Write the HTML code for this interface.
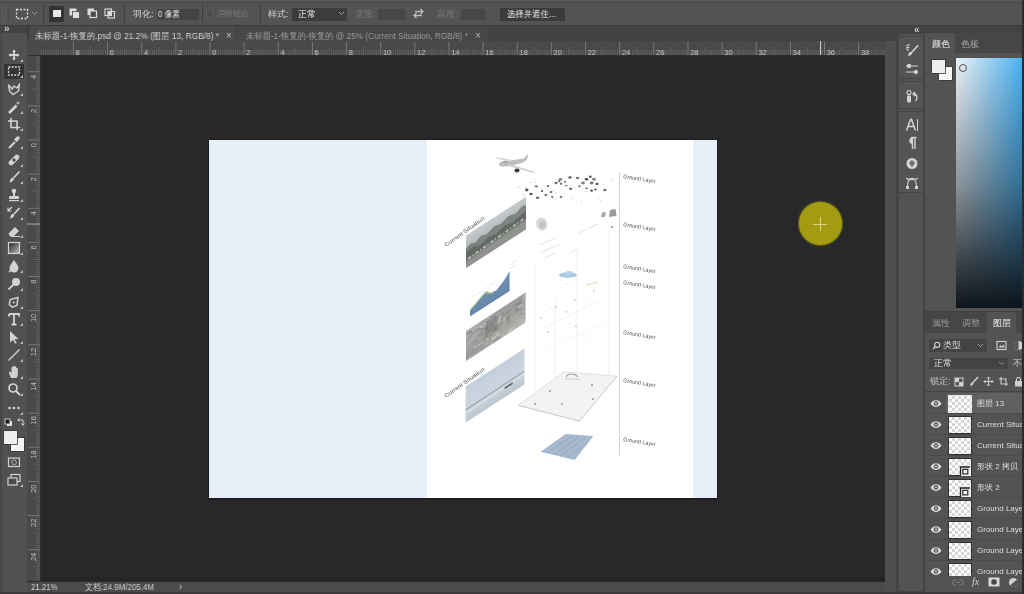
<!DOCTYPE html>
<html><head><meta charset="utf-8"><style>
html,body{margin:0;padding:0;width:1024px;height:594px;overflow:hidden;background:#4b4b4b;font-family:"Liberation Sans",sans-serif}
div,span,svg{position:absolute}
.t{white-space:nowrap;line-height:1;will-change:transform}
</style></head><body>
<div style="left:0px;top:0px;width:1024px;height:26px;background:#535353"></div>
<div style="left:0px;top:0px;width:1024px;height:2px;background:#575757"></div>
<div style="left:0px;top:2px;width:1024px;height:1px;background:#454545"></div>
<div style="left:0px;top:25px;width:1024px;height:1px;background:#3c3c3c"></div>
<div style="left:2px;top:5px;width:1px;height:17px;background:#5c5c5c"></div>
<div style="left:5px;top:5px;width:1px;height:17px;background:#5c5c5c"></div>
<div style="left:8px;top:5px;width:1px;height:17px;background:#4a4a4a"></div>
<svg style="left:15px;top:8px" width="14" height="12" viewBox="0 0 14 12"><rect x="1.5" y="1.5" width="11" height="9" fill="none" stroke="#dcdcdc" stroke-width="1.3" stroke-dasharray="2 1.5"/></svg>
<svg style="left:31px;top:11px" width="7" height="5" viewBox="0 0 7 5"><path d="M1 1 L3.5 3.5 L6 1" fill="none" stroke="#9a9a9a" stroke-width="1"/></svg>
<div style="left:43px;top:5px;width:1px;height:17px;background:#3f3f3f"></div>
<div style="left:49px;top:6px;width:15px;height:16px;background:#343434"></div>
<div style="left:53px;top:10px;width:8px;height:7px;background:#e8e8e8"></div>
<svg style="left:69px;top:8px" width="12" height="11" viewBox="0 0 12 11"><rect x="0.5" y="0.5" width="7" height="7" fill="#e0e0e0"/><rect x="3.5" y="3.5" width="7" height="7" fill="#e0e0e0" stroke="#4e4e4e" stroke-width="0.8"/></svg>
<svg style="left:87px;top:8px" width="11" height="11" viewBox="0 0 11 11"><rect x="0.5" y="0.5" width="6.5" height="6.5" fill="#dcdcdc"/><rect x="3" y="3" width="6.5" height="6.5" fill="#4e4e4e" stroke="#dcdcdc" stroke-width="1.2"/></svg>
<svg style="left:104px;top:8px" width="12" height="11" viewBox="0 0 12 11"><rect x="1" y="1" width="6.5" height="6.5" fill="none" stroke="#dcdcdc" stroke-width="1.1"/><rect x="4" y="3.5" width="6.5" height="6.5" fill="none" stroke="#dcdcdc" stroke-width="1.1"/><rect x="4" y="3.5" width="3.5" height="4" fill="#dcdcdc"/></svg>
<div style="left:124px;top:5px;width:1px;height:17px;background:#3f3f3f"></div>
<span class="t" style="left:133px;top:10px;color:#d4d4d4;font-size:9px">羽化:</span>
<div style="left:157px;top:9px;width:42px;height:11px;background:#444444"></div>
<span class="t" style="left:158px;top:10px;color:#e0e0e0;font-size:9px;transform:scaleX(0.84);transform-origin:0 0">0 像素</span>
<div style="left:202px;top:5px;width:1px;height:17px;background:#3f3f3f"></div>
<div style="left:206px;top:10px;width:7px;height:7px;background:#4a4a4a;box-shadow:inset 0 0 0 1px #5a5a5a"></div>
<span class="t" style="left:217px;top:10px;color:#7a7a7a;font-size:8px">消除锯齿</span>
<div style="left:260px;top:5px;width:1px;height:17px;background:#3f3f3f"></div>
<span class="t" style="left:268px;top:10px;color:#d4d4d4;font-size:9px">样式:</span>
<div style="left:292px;top:8px;width:55px;height:13px;background:#3c3c3c"></div>
<span class="t" style="left:298px;top:10px;color:#ececec;font-size:9px">正常</span>
<svg style="left:338px;top:11px" width="7" height="5" viewBox="0 0 7 5"><path d="M1 1 L3.5 3.5 L6 1" fill="none" stroke="#a0a0a0" stroke-width="1"/></svg>
<span class="t" style="left:355px;top:10px;color:#7c7c7c;font-size:9px">宽度:</span>
<div style="left:378px;top:9px;width:27px;height:11px;background:#474747"></div>
<svg style="left:412px;top:7px" width="13" height="13" viewBox="0 0 13 13"><path d="M3 4.5 H11 M8.5 2 L11 4.5 L8.5 7 M10 8.5 H2 M4.5 6 L2 8.5 L4.5 11" fill="none" stroke="#bdbdbd" stroke-width="1.3"/></svg>
<span class="t" style="left:437px;top:10px;color:#7c7c7c;font-size:9px">高度:</span>
<div style="left:461px;top:9px;width:24px;height:11px;background:#474747"></div>
<div style="left:500px;top:8px;width:65px;height:13px;background:#3b3b3b"></div>
<span class="t" style="left:507px;top:10px;color:#f0f0f0;font-size:9px;transform:scaleX(0.93);transform-origin:0 0">选择并遮住...</span>
<div style="left:27px;top:26px;width:870px;height:15px;background:#424242"></div>
<div style="left:30px;top:26px;width:205px;height:15px;background:#4b4b4b"></div>
<span class="t" style="left:35px;top:31.5px;color:#d2d2d2;font-size:9px;transform:scaleX(0.926);transform-origin:0 0">未标题-1-恢复的.psd @ 21.2% (图层 13, RGB/8) *</span>
<span class="t" style="left:226px;top:30.5px;color:#bdbdbd;font-size:10px">×</span>
<div style="left:236px;top:26px;width:252px;height:15px;background:#474747"></div>
<span class="t" style="left:246px;top:31.5px;color:#9c9c9c;font-size:9px;transform:scaleX(0.92);transform-origin:0 0">未标题-1-恢复的-恢复的 @ 25% (Current Situation, RGB/8) *</span>
<span class="t" style="left:475px;top:30.5px;color:#b0b0b0;font-size:10px">×</span>
<div style="left:0px;top:26px;width:27px;height:568px;background:#515151"></div>
<div style="left:0px;top:26px;width:27px;height:7px;background:#424242"></div>
<div style="left:27px;top:25px;width:1px;height:569px;background:#3a3a3a"></div>
<div style="left:0px;top:26px;width:2px;height:568px;background:#474747"></div>
<span class="t" style="left:4px;top:24px;color:#c8c8c8;font-size:10px;font-weight:bold;line-height:9px">»</span>
<div style="left:4px;top:64px;width:20px;height:15px;background:#343434"></div>
<svg style="left:5.5px;top:46.5px" width="16" height="16" viewBox="0 0 16 16"><path d="M8 2.5 L10 4.8 H8.9 V7.1 H11.2 V6 L13.5 8 L11.2 10 V8.9 H8.9 V11.2 H10 L8 13.5 L6 11.2 H7.1 V8.9 H4.8 V10 L2.5 8 L4.8 6 V7.1 H7.1 V4.8 H6 Z" fill="#d2d2d2"/></svg>
<svg style="left:19.5px;top:58.5px" width="3" height="3" viewBox="0 0 3 3"><path d="M3 0 V3 H0 Z" fill="#bdbdbd"/></svg>
<svg style="left:5.5px;top:63.0px" width="16" height="16" viewBox="0 0 16 16"><rect x="2.5" y="4" width="11" height="8" fill="none" stroke="#d2d2d2" stroke-width="1.3" stroke-dasharray="2 1.2"/></svg>
<svg style="left:19.5px;top:75px" width="3" height="3" viewBox="0 0 3 3"><path d="M3 0 V3 H0 Z" fill="#bdbdbd"/></svg>
<svg style="left:5.5px;top:80.5px" width="16" height="16" viewBox="0 0 16 16"><path d="M2.5 4 L6 8 L8 5 L11 7 L13.5 3 L12.5 10 L7 13.5 L3.5 10 Z" fill="none" stroke="#d2d2d2" stroke-width="1.4" stroke-linejoin="round"/></svg>
<svg style="left:19.5px;top:92.5px" width="3" height="3" viewBox="0 0 3 3"><path d="M3 0 V3 H0 Z" fill="#bdbdbd"/></svg>
<svg style="left:5.5px;top:98.5px" width="16" height="16" viewBox="0 0 16 16"><path d="M3 14 L10.5 6.5" stroke="#d2d2d2" stroke-width="2.6"/><path d="M12 2 L12.6 3.6 L14.2 4 L12.6 4.6 L12 6.2 L11.4 4.6 L9.8 4 L11.4 3.6 Z" fill="#d2d2d2"/></svg>
<svg style="left:19.5px;top:110.5px" width="3" height="3" viewBox="0 0 3 3"><path d="M3 0 V3 H0 Z" fill="#bdbdbd"/></svg>
<svg style="left:5.5px;top:115.5px" width="16" height="16" viewBox="0 0 16 16"><path d="M5 2 V11.5 H14 M2 5 H11 V14" fill="none" stroke="#d2d2d2" stroke-width="1.6"/></svg>
<svg style="left:19.5px;top:127.5px" width="3" height="3" viewBox="0 0 3 3"><path d="M3 0 V3 H0 Z" fill="#bdbdbd"/></svg>
<svg style="left:5.5px;top:133.5px" width="16" height="16" viewBox="0 0 16 16"><path d="M3 14 L9 8" stroke="#d2d2d2" stroke-width="2.2"/><path d="M8 5.5 L10.5 8 L13.5 5 A1.8 1.8 0 0 0 11 2.5 Z" fill="#d2d2d2"/></svg>
<svg style="left:19.5px;top:145.5px" width="3" height="3" viewBox="0 0 3 3"><path d="M3 0 V3 H0 Z" fill="#bdbdbd"/></svg>
<svg style="left:5.5px;top:151.5px" width="16" height="16" viewBox="0 0 16 16"><rect x="5.5" y="1.5" width="5" height="13" rx="2.2" transform="rotate(45 8 8)" fill="#d2d2d2"/><rect x="6.6" y="6.6" width="2.8" height="2.8" transform="rotate(45 8 8)" fill="#4a4a4a"/></svg>
<svg style="left:19.5px;top:163.5px" width="3" height="3" viewBox="0 0 3 3"><path d="M3 0 V3 H0 Z" fill="#bdbdbd"/></svg>
<svg style="left:5.5px;top:169.0px" width="16" height="16" viewBox="0 0 16 16"><path d="M13.5 2.5 L7.5 9" stroke="#d2d2d2" stroke-width="1.8"/><path d="M6.5 8.5 C4.5 9 4 11 3.5 13.5 C6 13 7.5 12 8 10 Z" fill="#d2d2d2"/></svg>
<svg style="left:19.5px;top:181px" width="3" height="3" viewBox="0 0 3 3"><path d="M3 0 V3 H0 Z" fill="#bdbdbd"/></svg>
<svg style="left:5.5px;top:187.0px" width="16" height="16" viewBox="0 0 16 16"><circle cx="8" cy="4" r="2.3" fill="#d2d2d2"/><rect x="7" y="5" width="2" height="4" fill="#d2d2d2"/><rect x="3" y="9" width="10" height="3" rx="1" fill="#d2d2d2"/><rect x="3" y="13" width="10" height="1.2" fill="#d2d2d2"/></svg>
<svg style="left:19.5px;top:199px" width="3" height="3" viewBox="0 0 3 3"><path d="M3 0 V3 H0 Z" fill="#bdbdbd"/></svg>
<svg style="left:5.5px;top:204.5px" width="16" height="16" viewBox="0 0 16 16"><path d="M13.5 3 L8 9" stroke="#d2d2d2" stroke-width="1.8"/><path d="M7 8.5 C5 9 4.5 11 4 13.5 C6.5 13 8 12 8.5 10 Z" fill="#d2d2d2"/><path d="M2 6 L6 2 M2 2.5 V6 H5.5" fill="none" stroke="#d2d2d2" stroke-width="1.2"/></svg>
<svg style="left:19.5px;top:216.5px" width="3" height="3" viewBox="0 0 3 3"><path d="M3 0 V3 H0 Z" fill="#bdbdbd"/></svg>
<svg style="left:5.5px;top:222.5px" width="16" height="16" viewBox="0 0 16 16"><path d="M2.5 10.5 L9 4 L13 8 L7.5 13.5 H4 Z" fill="#d2d2d2"/><path d="M5 13.5 H14" stroke="#d2d2d2" stroke-width="1"/></svg>
<svg style="left:19.5px;top:234.5px" width="3" height="3" viewBox="0 0 3 3"><path d="M3 0 V3 H0 Z" fill="#bdbdbd"/></svg>
<svg style="left:5.5px;top:239.5px" width="16" height="16" viewBox="0 0 16 16"><defs><linearGradient id="gg" x1="0" y1="0" x2="1" y2="1"><stop offset="0" stop-color="#202020"/><stop offset="1" stop-color="#bdbdbd"/></linearGradient></defs><rect x="2.5" y="2.5" width="11" height="11" fill="url(#gg)" stroke="#d2d2d2" stroke-width="1.2"/></svg>
<svg style="left:19.5px;top:251.5px" width="3" height="3" viewBox="0 0 3 3"><path d="M3 0 V3 H0 Z" fill="#bdbdbd"/></svg>
<svg style="left:5.5px;top:257.5px" width="16" height="16" viewBox="0 0 16 16"><path d="M8 2 C10 5 12.5 7.5 12.5 10 A4.5 4.5 0 0 1 3.5 10 C3.5 7.5 6 5 8 2 Z" fill="#d2d2d2"/><path d="M3 14 L7 10" stroke="#d2d2d2" stroke-width="1.6"/></svg>
<svg style="left:19.5px;top:269.5px" width="3" height="3" viewBox="0 0 3 3"><path d="M3 0 V3 H0 Z" fill="#bdbdbd"/></svg>
<svg style="left:5.5px;top:275.5px" width="16" height="16" viewBox="0 0 16 16"><circle cx="10" cy="6" r="4" fill="#d2d2d2"/><path d="M7.5 8.5 L2.5 13.5" stroke="#d2d2d2" stroke-width="1.8"/></svg>
<svg style="left:19.5px;top:287.5px" width="3" height="3" viewBox="0 0 3 3"><path d="M3 0 V3 H0 Z" fill="#bdbdbd"/></svg>
<svg style="left:5.5px;top:293.5px" width="16" height="16" viewBox="0 0 16 16"><path d="M8 2 L12.5 8.5 L10 13 H6 L3.5 8.5 Z" fill="none" stroke="#d2d2d2" stroke-width="1.5" transform="rotate(40 8 8)"/><circle cx="8" cy="8.5" r="1" fill="#d2d2d2" transform="rotate(40 8 8)"/></svg>
<svg style="left:19.5px;top:305.5px" width="3" height="3" viewBox="0 0 3 3"><path d="M3 0 V3 H0 Z" fill="#bdbdbd"/></svg>
<svg style="left:5.5px;top:311.0px" width="16" height="16" viewBox="0 0 16 16"><path d="M3 3 H13 V5.5 M3 3 V5.5 M8 3 V13.5 M5.5 13.5 H10.5" fill="none" stroke="#d2d2d2" stroke-width="1.8"/></svg>
<svg style="left:19.5px;top:323px" width="3" height="3" viewBox="0 0 3 3"><path d="M3 0 V3 H0 Z" fill="#bdbdbd"/></svg>
<svg style="left:5.5px;top:328.5px" width="16" height="16" viewBox="0 0 16 16"><path d="M4 2 L12.5 10 L8.6 10.3 L10.8 14 L9.2 14.8 L7.2 11 L4 13.5 Z" fill="#d2d2d2"/></svg>
<svg style="left:19.5px;top:340.5px" width="3" height="3" viewBox="0 0 3 3"><path d="M3 0 V3 H0 Z" fill="#bdbdbd"/></svg>
<svg style="left:5.5px;top:346.5px" width="16" height="16" viewBox="0 0 16 16"><path d="M2.5 13.5 L13.5 2.5" stroke="#d2d2d2" stroke-width="1.5"/></svg>
<svg style="left:19.5px;top:358.5px" width="3" height="3" viewBox="0 0 3 3"><path d="M3 0 V3 H0 Z" fill="#bdbdbd"/></svg>
<svg style="left:5.5px;top:363.5px" width="16" height="16" viewBox="0 0 16 16"><path d="M5 14 L3 9 C2.5 7.5 4 7 4.8 8.2 L5.5 9 V3.5 C5.5 2.5 7 2.5 7 3.5 V7 V2.5 C7 1.5 8.6 1.5 8.6 2.5 V7 V3 C8.6 2 10.2 2 10.2 3 V7.5 V4.5 C10.2 3.6 11.8 3.6 11.8 4.5 V10 C11.8 12 11 14 10 14 Z" fill="#d2d2d2"/></svg>
<svg style="left:19.5px;top:375.5px" width="3" height="3" viewBox="0 0 3 3"><path d="M3 0 V3 H0 Z" fill="#bdbdbd"/></svg>
<svg style="left:5.5px;top:381.0px" width="16" height="16" viewBox="0 0 16 16"><circle cx="7" cy="7" r="4" fill="none" stroke="#d2d2d2" stroke-width="1.7"/><path d="M10 10 L14 14" stroke="#d2d2d2" stroke-width="2.2"/></svg>
<svg style="left:19.5px;top:393px" width="3" height="3" viewBox="0 0 3 3"><path d="M3 0 V3 H0 Z" fill="#bdbdbd"/></svg>
<svg style="left:5.5px;top:400.0px" width="16" height="16" viewBox="0 0 16 16"><circle cx="3.5" cy="8" r="1.3" fill="#d2d2d2"/><circle cx="8" cy="8" r="1.3" fill="#d2d2d2"/><circle cx="12.5" cy="8" r="1.3" fill="#d2d2d2"/></svg>
<svg style="left:19.5px;top:412px" width="3" height="3" viewBox="0 0 3 3"><path d="M3 0 V3 H0 Z" fill="#bdbdbd"/></svg>
<svg style="left:4px;top:418px" width="9" height="9" viewBox="0 0 9 9"><rect x="3" y="3" width="5" height="5" fill="#e0e0e0"/><rect x="1" y="1" width="5" height="5" fill="#1e1e1e" stroke="#e0e0e0" stroke-width="0.8"/></svg>
<svg style="left:16px;top:418px" width="9" height="9" viewBox="0 0 9 9"><path d="M2 2 H7 V7 M5.5 5.5 L7 7.5 L8.5 5.5 M3.5 0.5 L1.5 2 L3.5 3.5" fill="none" stroke="#d0d0d0" stroke-width="1"/></svg>
<div style="left:11px;top:438px;width:13px;height:13px;background:#f5f5f5;box-shadow:0 0 0 0.8px #383838"></div>
<div style="left:4px;top:431px;width:13px;height:13px;background:#eceef0;box-shadow:0 0 0 0.8px #383838"></div>
<svg style="left:5.5px;top:454.0px" width="16" height="16" viewBox="0 0 16 16"><rect x="2.5" y="4" width="11" height="8.5" fill="none" stroke="#d2d2d2" stroke-width="1.2"/><circle cx="8" cy="8.2" r="2.3" fill="none" stroke="#d2d2d2" stroke-width="1.1" stroke-dasharray="1 0.8"/></svg>
<svg style="left:5.5px;top:472.0px" width="16" height="16" viewBox="0 0 16 16"><rect x="5" y="2.5" width="9" height="7" fill="none" stroke="#d2d2d2" stroke-width="1.2"/><rect x="2" y="6" width="9" height="7" fill="#4a4a4a" stroke="#d2d2d2" stroke-width="1.2"/></svg>
<svg style="left:19.5px;top:484px" width="3" height="3" viewBox="0 0 3 3"><path d="M3 0 V3 H0 Z" fill="#bdbdbd"/></svg>
<div style="left:27px;top:41px;width:858px;height:15px;background:#494949"></div>
<div style="left:27px;top:56px;width:14px;height:525px;background:#494949"></div>
<svg style="left:28px;top:41px;will-change:transform" width="857" height="15" viewBox="0 0 857 15"><path d="M13.43 9 V15 M15.57 9 V15 M17.70 9 V15 M19.84 9 V15 M21.97 9 V15 M24.10 9 V15 M26.24 9 V15 M28.37 6 V15 M30.50 9 V15 M32.64 9 V15 M34.77 9 V15 M36.91 9 V15 M39.04 9 V15 M41.17 9 V15 M43.31 9 V15 M47.57 9 V15 M49.71 9 V15 M51.84 9 V15 M53.97 9 V15 M56.11 9 V15 M58.24 9 V15 M60.38 9 V15 M62.51 6 V15 M64.64 9 V15 M66.78 9 V15 M68.91 9 V15 M71.05 9 V15 M73.18 9 V15 M75.31 9 V15 M77.45 9 V15 M81.71 9 V15 M83.85 9 V15 M85.98 9 V15 M88.11 9 V15 M90.25 9 V15 M92.38 9 V15 M94.52 9 V15 M96.65 6 V15 M98.78 9 V15 M100.92 9 V15 M103.05 9 V15 M105.19 9 V15 M107.32 9 V15 M109.45 9 V15 M111.59 9 V15 M115.85 9 V15 M117.99 9 V15 M120.12 9 V15 M122.25 9 V15 M124.39 9 V15 M126.52 9 V15 M128.66 9 V15 M130.79 6 V15 M132.92 9 V15 M135.06 9 V15 M137.19 9 V15 M139.32 9 V15 M141.46 9 V15 M143.59 9 V15 M145.73 9 V15 M149.99 9 V15 M152.13 9 V15 M154.26 9 V15 M156.40 9 V15 M158.53 9 V15 M160.66 9 V15 M162.80 9 V15 M164.93 6 V15 M167.06 9 V15 M169.20 9 V15 M171.33 9 V15 M173.47 9 V15 M175.60 9 V15 M177.73 9 V15 M179.87 9 V15 M184.13 9 V15 M186.27 9 V15 M188.40 9 V15 M190.53 9 V15 M192.67 9 V15 M194.80 9 V15 M196.94 9 V15 M199.07 6 V15 M201.20 9 V15 M203.34 9 V15 M205.47 9 V15 M207.60 9 V15 M209.74 9 V15 M211.87 9 V15 M214.01 9 V15 M218.27 9 V15 M220.41 9 V15 M222.54 9 V15 M224.68 9 V15 M226.81 9 V15 M228.94 9 V15 M231.08 9 V15 M233.21 6 V15 M235.34 9 V15 M237.48 9 V15 M239.61 9 V15 M241.75 9 V15 M243.88 9 V15 M246.01 9 V15 M248.15 9 V15 M252.41 9 V15 M254.55 9 V15 M256.68 9 V15 M258.81 9 V15 M260.95 9 V15 M263.08 9 V15 M265.22 9 V15 M267.35 6 V15 M269.48 9 V15 M271.62 9 V15 M273.75 9 V15 M275.88 9 V15 M278.02 9 V15 M280.15 9 V15 M282.29 9 V15 M286.55 9 V15 M288.69 9 V15 M290.82 9 V15 M292.95 9 V15 M295.09 9 V15 M297.22 9 V15 M299.36 9 V15 M301.49 6 V15 M303.62 9 V15 M305.76 9 V15 M307.89 9 V15 M310.02 9 V15 M312.16 9 V15 M314.29 9 V15 M316.43 9 V15 M320.69 9 V15 M322.83 9 V15 M324.96 9 V15 M327.10 9 V15 M329.23 9 V15 M331.36 9 V15 M333.50 9 V15 M335.63 6 V15 M337.76 9 V15 M339.90 9 V15 M342.03 9 V15 M344.16 9 V15 M346.30 9 V15 M348.43 9 V15 M350.57 9 V15 M354.83 9 V15 M356.97 9 V15 M359.10 9 V15 M361.24 9 V15 M363.37 9 V15 M365.50 9 V15 M367.64 9 V15 M369.77 6 V15 M371.90 9 V15 M374.04 9 V15 M376.17 9 V15 M378.31 9 V15 M380.44 9 V15 M382.57 9 V15 M384.71 9 V15 M388.97 9 V15 M391.11 9 V15 M393.24 9 V15 M395.38 9 V15 M397.51 9 V15 M399.64 9 V15 M401.78 9 V15 M403.91 6 V15 M406.04 9 V15 M408.18 9 V15 M410.31 9 V15 M412.44 9 V15 M414.58 9 V15 M416.71 9 V15 M418.85 9 V15 M423.11 9 V15 M425.25 9 V15 M427.38 9 V15 M429.51 9 V15 M431.65 9 V15 M433.78 9 V15 M435.92 9 V15 M438.05 6 V15 M440.18 9 V15 M442.32 9 V15 M444.45 9 V15 M446.58 9 V15 M448.72 9 V15 M450.85 9 V15 M452.99 9 V15 M457.25 9 V15 M459.39 9 V15 M461.52 9 V15 M463.66 9 V15 M465.79 9 V15 M467.92 9 V15 M470.06 9 V15 M472.19 6 V15 M474.32 9 V15 M476.46 9 V15 M478.59 9 V15 M480.73 9 V15 M482.86 9 V15 M484.99 9 V15 M487.13 9 V15 M491.39 9 V15 M493.53 9 V15 M495.66 9 V15 M497.80 9 V15 M499.93 9 V15 M502.06 9 V15 M504.20 9 V15 M506.33 6 V15 M508.46 9 V15 M510.60 9 V15 M512.73 9 V15 M514.87 9 V15 M517.00 9 V15 M519.13 9 V15 M521.27 9 V15 M525.53 9 V15 M527.67 9 V15 M529.80 9 V15 M531.93 9 V15 M534.07 9 V15 M536.20 9 V15 M538.34 9 V15 M540.47 6 V15 M542.60 9 V15 M544.74 9 V15 M546.87 9 V15 M549.00 9 V15 M551.14 9 V15 M553.27 9 V15 M555.41 9 V15 M559.67 9 V15 M561.81 9 V15 M563.94 9 V15 M566.08 9 V15 M568.21 9 V15 M570.34 9 V15 M572.48 9 V15 M574.61 6 V15 M576.74 9 V15 M578.88 9 V15 M581.01 9 V15 M583.14 9 V15 M585.28 9 V15 M587.41 9 V15 M589.55 9 V15 M593.81 9 V15 M595.95 9 V15 M598.08 9 V15 M600.22 9 V15 M602.35 9 V15 M604.48 9 V15 M606.62 9 V15 M608.75 6 V15 M610.88 9 V15 M613.02 9 V15 M615.15 9 V15 M617.29 9 V15 M619.42 9 V15 M621.55 9 V15 M623.69 9 V15 M627.95 9 V15 M630.09 9 V15 M632.22 9 V15 M634.36 9 V15 M636.49 9 V15 M638.62 9 V15 M640.76 9 V15 M642.89 6 V15 M645.02 9 V15 M647.16 9 V15 M649.29 9 V15 M651.42 9 V15 M653.56 9 V15 M655.69 9 V15 M657.83 9 V15 M662.09 9 V15 M664.23 9 V15 M666.36 9 V15 M668.50 9 V15 M670.63 9 V15 M672.76 9 V15 M674.90 9 V15 M677.03 6 V15 M679.16 9 V15 M681.30 9 V15 M683.43 9 V15 M685.57 9 V15 M687.70 9 V15 M689.83 9 V15 M691.97 9 V15 M696.23 9 V15 M698.37 9 V15 M700.50 9 V15 M702.63 9 V15 M704.77 9 V15 M706.90 9 V15 M709.04 9 V15 M711.17 6 V15 M713.30 9 V15 M715.44 9 V15 M717.57 9 V15 M719.71 9 V15 M721.84 9 V15 M723.97 9 V15 M726.11 9 V15 M730.37 9 V15 M732.51 9 V15 M734.64 9 V15 M736.77 9 V15 M738.91 9 V15 M741.04 9 V15 M743.18 9 V15 M745.31 6 V15 M747.44 9 V15 M749.58 9 V15 M751.71 9 V15 M753.85 9 V15 M755.98 9 V15 M758.11 9 V15 M760.25 9 V15 M764.51 9 V15 M766.65 9 V15 M768.78 9 V15 M770.91 9 V15 M773.05 9 V15 M775.18 9 V15 M777.32 9 V15 M779.45 6 V15 M781.58 9 V15 M783.72 9 V15 M785.85 9 V15 M787.99 9 V15 M790.12 9 V15 M792.25 9 V15 M794.39 9 V15 M798.65 9 V15 M800.79 9 V15 M802.92 9 V15 M805.06 9 V15 M807.19 9 V15 M809.32 9 V15 M811.46 9 V15 M813.59 6 V15 M815.72 9 V15 M817.86 9 V15 M819.99 9 V15 M822.12 9 V15 M824.26 9 V15 M826.39 9 V15 M828.53 9 V15 M832.79 9 V15 M834.93 9 V15 M837.06 9 V15 M839.20 9 V15 M841.33 9 V15 M843.46 9 V15 M845.60 9 V15 M847.73 6 V15 M849.86 9 V15 M852.00 9 V15 M854.13 9 V15 M856.26 9 V15" stroke="#6a6a6a" stroke-width="0.7"/><path d="M45.44 1 V15 M79.58 1 V15 M113.72 1 V15 M147.86 1 V15 M182.00 1 V15 M216.14 1 V15 M250.28 1 V15 M284.42 1 V15 M318.56 1 V15 M352.70 1 V15 M386.84 1 V15 M420.98 1 V15 M455.12 1 V15 M489.26 1 V15 M523.40 1 V15 M557.54 1 V15 M591.68 1 V15 M625.82 1 V15 M659.96 1 V15 M694.10 1 V15 M728.24 1 V15 M762.38 1 V15 M796.52 1 V15 M830.66 1 V15" stroke="#858585" stroke-width="0.8"/><text x="47.6" y="13.8" font-size="7.5" fill="#c2c2c2" font-family="Liberation Sans">8</text><text x="81.8" y="13.8" font-size="7.5" fill="#c2c2c2" font-family="Liberation Sans">6</text><text x="115.9" y="13.8" font-size="7.5" fill="#c2c2c2" font-family="Liberation Sans">4</text><text x="150.1" y="13.8" font-size="7.5" fill="#c2c2c2" font-family="Liberation Sans">2</text><text x="184.2" y="13.8" font-size="7.5" fill="#c2c2c2" font-family="Liberation Sans">0</text><text x="218.3" y="13.8" font-size="7.5" fill="#c2c2c2" font-family="Liberation Sans">2</text><text x="252.5" y="13.8" font-size="7.5" fill="#c2c2c2" font-family="Liberation Sans">4</text><text x="286.6" y="13.8" font-size="7.5" fill="#c2c2c2" font-family="Liberation Sans">6</text><text x="320.8" y="13.8" font-size="7.5" fill="#c2c2c2" font-family="Liberation Sans">8</text><text x="354.9" y="13.8" font-size="7.5" fill="#c2c2c2" font-family="Liberation Sans">10</text><text x="389.0" y="13.8" font-size="7.5" fill="#c2c2c2" font-family="Liberation Sans">12</text><text x="423.2" y="13.8" font-size="7.5" fill="#c2c2c2" font-family="Liberation Sans">14</text><text x="457.3" y="13.8" font-size="7.5" fill="#c2c2c2" font-family="Liberation Sans">16</text><text x="491.5" y="13.8" font-size="7.5" fill="#c2c2c2" font-family="Liberation Sans">18</text><text x="525.6" y="13.8" font-size="7.5" fill="#c2c2c2" font-family="Liberation Sans">20</text><text x="559.7" y="13.8" font-size="7.5" fill="#c2c2c2" font-family="Liberation Sans">22</text><text x="593.9" y="13.8" font-size="7.5" fill="#c2c2c2" font-family="Liberation Sans">24</text><text x="628.0" y="13.8" font-size="7.5" fill="#c2c2c2" font-family="Liberation Sans">26</text><text x="662.2" y="13.8" font-size="7.5" fill="#c2c2c2" font-family="Liberation Sans">28</text><text x="696.3" y="13.8" font-size="7.5" fill="#c2c2c2" font-family="Liberation Sans">30</text><text x="730.4" y="13.8" font-size="7.5" fill="#c2c2c2" font-family="Liberation Sans">32</text><text x="764.6" y="13.8" font-size="7.5" fill="#c2c2c2" font-family="Liberation Sans">34</text><text x="798.7" y="13.8" font-size="7.5" fill="#c2c2c2" font-family="Liberation Sans">36</text><text x="832.9" y="13.8" font-size="7.5" fill="#c2c2c2" font-family="Liberation Sans">38</text><path d="M792.6 0 V15" stroke="#dcdcdc" stroke-width="1"/></svg>
<div style="left:28px;top:55px;width:857px;height:1px;background:#2e2e2e"></div>
<svg style="left:27px;top:56px;will-change:transform" width="14" height="525" viewBox="0 0 14 525"><path d="M9 0.78 H14 M9 2.92 H14 M9 5.05 H14 M9 7.19 H14 M9 9.32 H14 M9 11.45 H14 M9 13.59 H14 M9 17.85 H14 M9 19.99 H14 M9 22.12 H14 M9 24.25 H14 M9 26.39 H14 M9 28.52 H14 M9 30.66 H14 M6 32.79 H14 M9 34.92 H14 M9 37.06 H14 M9 39.19 H14 M9 41.33 H14 M9 43.46 H14 M9 45.59 H14 M9 47.73 H14 M9 51.99 H14 M9 54.13 H14 M9 56.26 H14 M9 58.39 H14 M9 60.53 H14 M9 62.66 H14 M9 64.80 H14 M6 66.93 H14 M9 69.06 H14 M9 71.20 H14 M9 73.33 H14 M9 75.47 H14 M9 77.60 H14 M9 79.73 H14 M9 81.87 H14 M9 86.13 H14 M9 88.27 H14 M9 90.40 H14 M9 92.53 H14 M9 94.67 H14 M9 96.80 H14 M9 98.94 H14 M6 101.07 H14 M9 103.20 H14 M9 105.34 H14 M9 107.47 H14 M9 109.60 H14 M9 111.74 H14 M9 113.87 H14 M9 116.01 H14 M9 120.27 H14 M9 122.41 H14 M9 124.54 H14 M9 126.68 H14 M9 128.81 H14 M9 130.94 H14 M9 133.08 H14 M6 135.21 H14 M9 137.34 H14 M9 139.48 H14 M9 141.61 H14 M9 143.75 H14 M9 145.88 H14 M9 148.01 H14 M9 150.15 H14 M9 154.41 H14 M9 156.55 H14 M9 158.68 H14 M9 160.81 H14 M9 162.95 H14 M9 165.08 H14 M9 167.22 H14 M6 169.35 H14 M9 171.48 H14 M9 173.62 H14 M9 175.75 H14 M9 177.88 H14 M9 180.02 H14 M9 182.15 H14 M9 184.29 H14 M9 188.55 H14 M9 190.69 H14 M9 192.82 H14 M9 194.95 H14 M9 197.09 H14 M9 199.22 H14 M9 201.36 H14 M6 203.49 H14 M9 205.62 H14 M9 207.76 H14 M9 209.89 H14 M9 212.02 H14 M9 214.16 H14 M9 216.29 H14 M9 218.43 H14 M9 222.69 H14 M9 224.83 H14 M9 226.96 H14 M9 229.10 H14 M9 231.23 H14 M9 233.36 H14 M9 235.50 H14 M6 237.63 H14 M9 239.76 H14 M9 241.90 H14 M9 244.03 H14 M9 246.16 H14 M9 248.30 H14 M9 250.43 H14 M9 252.57 H14 M9 256.83 H14 M9 258.97 H14 M9 261.10 H14 M9 263.24 H14 M9 265.37 H14 M9 267.50 H14 M9 269.64 H14 M6 271.77 H14 M9 273.90 H14 M9 276.04 H14 M9 278.17 H14 M9 280.31 H14 M9 282.44 H14 M9 284.57 H14 M9 286.71 H14 M9 290.97 H14 M9 293.11 H14 M9 295.24 H14 M9 297.38 H14 M9 299.51 H14 M9 301.64 H14 M9 303.78 H14 M6 305.91 H14 M9 308.04 H14 M9 310.18 H14 M9 312.31 H14 M9 314.44 H14 M9 316.58 H14 M9 318.71 H14 M9 320.85 H14 M9 325.11 H14 M9 327.25 H14 M9 329.38 H14 M9 331.51 H14 M9 333.65 H14 M9 335.78 H14 M9 337.92 H14 M6 340.05 H14 M9 342.18 H14 M9 344.32 H14 M9 346.45 H14 M9 348.58 H14 M9 350.72 H14 M9 352.85 H14 M9 354.99 H14 M9 359.25 H14 M9 361.39 H14 M9 363.52 H14 M9 365.66 H14 M9 367.79 H14 M9 369.92 H14 M9 372.06 H14 M6 374.19 H14 M9 376.32 H14 M9 378.46 H14 M9 380.59 H14 M9 382.73 H14 M9 384.86 H14 M9 386.99 H14 M9 389.13 H14 M9 393.39 H14 M9 395.53 H14 M9 397.66 H14 M9 399.80 H14 M9 401.93 H14 M9 404.06 H14 M9 406.20 H14 M6 408.33 H14 M9 410.46 H14 M9 412.60 H14 M9 414.73 H14 M9 416.87 H14 M9 419.00 H14 M9 421.13 H14 M9 423.27 H14 M9 427.53 H14 M9 429.67 H14 M9 431.80 H14 M9 433.94 H14 M9 436.07 H14 M9 438.20 H14 M9 440.34 H14 M6 442.47 H14 M9 444.60 H14 M9 446.74 H14 M9 448.87 H14 M9 451.00 H14 M9 453.14 H14 M9 455.27 H14 M9 457.41 H14 M9 461.67 H14 M9 463.81 H14 M9 465.94 H14 M9 468.08 H14 M9 470.21 H14 M9 472.34 H14 M9 474.48 H14 M6 476.61 H14 M9 478.74 H14 M9 480.88 H14 M9 483.01 H14 M9 485.14 H14 M9 487.28 H14 M9 489.41 H14 M9 491.55 H14 M9 495.81 H14 M9 497.95 H14 M9 500.08 H14 M9 502.22 H14 M9 504.35 H14 M9 506.48 H14 M9 508.62 H14 M6 510.75 H14 M9 512.88 H14 M9 515.02 H14 M9 517.15 H14 M9 519.29 H14 M9 521.42 H14 M9 523.55 H14" stroke="#6a6a6a" stroke-width="0.7"/><path d="M1 15.72 H14 M1 49.86 H14 M1 84.00 H14 M1 118.14 H14 M1 152.28 H14 M1 186.42 H14 M1 220.56 H14 M1 254.70 H14 M1 288.84 H14 M1 322.98 H14 M1 357.12 H14 M1 391.26 H14 M1 425.40 H14 M1 459.54 H14 M1 493.68 H14" stroke="#858585" stroke-width="0.8"/><text x="0" y="0" transform="translate(8.8 22.9) rotate(-90)" font-size="7.5" fill="#c2c2c2" font-family="Liberation Sans">4</text><text x="0" y="0" transform="translate(8.8 57.1) rotate(-90)" font-size="7.5" fill="#c2c2c2" font-family="Liberation Sans">2</text><text x="0" y="0" transform="translate(8.8 91.2) rotate(-90)" font-size="7.5" fill="#c2c2c2" font-family="Liberation Sans">0</text><text x="0" y="0" transform="translate(8.8 125.3) rotate(-90)" font-size="7.5" fill="#c2c2c2" font-family="Liberation Sans">2</text><text x="0" y="0" transform="translate(8.8 159.5) rotate(-90)" font-size="7.5" fill="#c2c2c2" font-family="Liberation Sans">4</text><text x="0" y="0" transform="translate(8.8 193.6) rotate(-90)" font-size="7.5" fill="#c2c2c2" font-family="Liberation Sans">6</text><text x="0" y="0" transform="translate(8.8 227.8) rotate(-90)" font-size="7.5" fill="#c2c2c2" font-family="Liberation Sans">8</text><text x="0" y="0" transform="translate(8.8 266.1) rotate(-90)" font-size="7.5" fill="#c2c2c2" font-family="Liberation Sans">10</text><text x="0" y="0" transform="translate(8.8 300.2) rotate(-90)" font-size="7.5" fill="#c2c2c2" font-family="Liberation Sans">12</text><text x="0" y="0" transform="translate(8.8 334.4) rotate(-90)" font-size="7.5" fill="#c2c2c2" font-family="Liberation Sans">14</text><text x="0" y="0" transform="translate(8.8 368.5) rotate(-90)" font-size="7.5" fill="#c2c2c2" font-family="Liberation Sans">16</text><text x="0" y="0" transform="translate(8.8 402.7) rotate(-90)" font-size="7.5" fill="#c2c2c2" font-family="Liberation Sans">18</text><text x="0" y="0" transform="translate(8.8 436.8) rotate(-90)" font-size="7.5" fill="#c2c2c2" font-family="Liberation Sans">20</text><text x="0" y="0" transform="translate(8.8 470.9) rotate(-90)" font-size="7.5" fill="#c2c2c2" font-family="Liberation Sans">22</text><text x="0" y="0" transform="translate(8.8 505.1) rotate(-90)" font-size="7.5" fill="#c2c2c2" font-family="Liberation Sans">24</text><path d="M0 168 H14" stroke="#a8a8a8" stroke-width="1"/></svg>
<div style="left:40px;top:56px;width:1px;height:525px;background:#2e2e2e"></div>
<div style="left:41px;top:56px;width:844px;height:525px;background:#28282a"></div>
<div style="left:41px;top:578px;width:844px;height:4px;background:#242426"></div>
<div style="left:27px;top:582px;width:858px;height:10px;background:#4b4b4b"></div>
<div style="left:27px;top:581px;width:858px;height:1px;background:#2a2a2a"></div>
<span class="t" style="left:31px;top:583px;color:#d8d8d8;font-size:9px;transform:scaleX(0.87);transform-origin:0 0">21.21%</span>
<span class="t" style="left:85px;top:583px;color:#cfcfcf;font-size:9px;transform:scaleX(0.885);transform-origin:0 0">文档:24.9M/205.4M</span>
<span class="t" style="left:179px;top:582px;color:#bdbdbd;font-size:10px">›</span>
<div style="left:0px;top:592px;width:1024px;height:2px;background:#3a3a3a"></div>
<div style="left:885px;top:41px;width:12px;height:551px;background:#4f4f4f"></div>
<div style="left:896px;top:26px;width:29px;height:566px;background:#434343"></div>
<div style="left:896px;top:26px;width:29px;height:7px;background:#424242"></div>
<div style="left:898px;top:33px;width:26px;height:559px;background:#535353;box-shadow:inset 0 0 0 1px #444"></div>
<div style="left:925px;top:26px;width:97px;height:566px;background:#535353"></div>
<div style="left:925px;top:26px;width:97px;height:7px;background:#424242"></div>
<div style="left:925px;top:33px;width:97px;height:20px;background:#464646"></div>
<div style="left:925px;top:33px;width:30px;height:20px;background:#535353"></div>
<span class="t" style="left:932px;top:39.5px;color:#f2f2f2;font-size:9px">颜色</span>
<span class="t" style="left:961px;top:39.5px;color:#a8a8a8;font-size:9px">色板</span>
<div style="left:939px;top:67px;width:13px;height:13px;background:#f7f7f7;box-shadow:0 0 0 0.8px #3a3a3a"></div>
<div style="left:932px;top:60px;width:13px;height:13px;background:#eceef0;box-shadow:0 0 0 0.8px #3a3a3a"></div>
<div style="left:956px;top:58px;width:66px;height:250px;background:linear-gradient(to bottom,rgba(14,20,26,0),rgba(14,20,26,0.42) 50%,rgb(14,20,26)),linear-gradient(to right,#eef2f6,#4ab2f2)"></div>
<div style="left:958.5px;top:63.5px;width:6px;height:6px;border:1.5px solid #505050;border-radius:50%"></div>
<div style="left:925px;top:311px;width:97px;height:1px;background:#404040"></div>
<div style="left:925px;top:312px;width:97px;height:21px;background:#464646"></div>
<div style="left:987px;top:312px;width:29px;height:21px;background:#535353"></div>
<span class="t" style="left:932px;top:319px;color:#9a9a9a;font-size:9px">属性</span>
<span class="t" style="left:962px;top:319px;color:#9a9a9a;font-size:9px">调整</span>
<span class="t" style="left:993px;top:319px;color:#f2f2f2;font-size:9px">图层</span>
<div style="left:898px;top:36px;width:26px;height:43px;background:#545454;box-shadow:inset 0 0 0 1px #454545"></div>
<div style="left:898px;top:81px;width:26px;height:28px;background:#545454;box-shadow:inset 0 0 0 1px #454545"></div>
<div style="left:898px;top:111px;width:26px;height:82px;background:#545454;box-shadow:inset 0 0 0 1px #454545"></div>
<span class="t" style="left:914px;top:25px;color:#c8c8c8;font-size:10px;font-weight:bold;line-height:9px">«</span>
<svg style="left:903.5px;top:42px" width="16" height="16" viewBox="0 0 16 16"><path d="M3 3 H6 M3 5.5 H5.5 M3 8 H5" stroke="#d2d2d2" stroke-width="1"/><path d="M3 3 V8" stroke="#d2d2d2" stroke-width="1"/><path d="M14 3.5 L8 10" stroke="#d2d2d2" stroke-width="1.8"/><path d="M7 9.5 C5 10 4.5 12 4 14 C6.5 13.5 8 12.5 8.5 11 Z" fill="#d2d2d2"/></svg>
<svg style="left:903.5px;top:60.5px" width="16" height="16" viewBox="0 0 16 16"><path d="M2 5 H14 M2 11 H14" stroke="#d2d2d2" stroke-width="1.2"/><circle cx="5" cy="5" r="2.2" fill="#d2d2d2"/><path d="M9 11 L13 8.5 V13.5 Z" fill="#d2d2d2"/><circle cx="12" cy="11" r="2" fill="#d2d2d2"/></svg>
<svg style="left:903.5px;top:89px" width="16" height="16" viewBox="0 0 16 16"><circle cx="5" cy="3.5" r="2" fill="none" stroke="#d2d2d2" stroke-width="1.1"/><rect x="3" y="6.5" width="4" height="7" rx="1" fill="#d2d2d2"/><path d="M10 5 C13 5 14 9 11.5 12 M11 3 L9 5 L11 7" fill="none" stroke="#d2d2d2" stroke-width="1.4"/></svg>
<svg style="left:903.5px;top:116.5px" width="16" height="16" viewBox="0 0 16 16"><path d="M2.5 13.5 L6.5 2.5 H7.5 L11.5 13.5 M4.2 9.5 H9.8" fill="none" stroke="#d2d2d2" stroke-width="1.5"/><path d="M13.5 2 V14" stroke="#d2d2d2" stroke-width="1"/></svg>
<svg style="left:903.5px;top:135px" width="16" height="16" viewBox="0 0 16 16"><path d="M7 2.5 H12.5 M8.5 2.5 V14 M11 2.5 V14" stroke="#d2d2d2" stroke-width="1.4"/><path d="M8.5 2.5 A3.2 3.2 0 0 0 8.5 8.9 Z" fill="#d2d2d2"/></svg>
<svg style="left:903.5px;top:155px" width="16" height="16" viewBox="0 0 16 16"><circle cx="8" cy="8.5" r="5.5" fill="#d2d2d2"/><path d="M5 8 L8 5 L11 8 L8 12 Z" fill="#6a6a6a"/></svg>
<svg style="left:903.5px;top:174.5px" width="16" height="16" viewBox="0 0 16 16"><path d="M2.5 4 H13.5" stroke="#d2d2d2" stroke-width="1.2"/><circle cx="8" cy="4" r="1.3" fill="#d2d2d2"/><path d="M2.5 4 L4 4 L1.5 2 Z M13.5 4 L15 2 L12 4Z" fill="#d2d2d2"/><path d="M8 4 C4 4 3.5 8 3.5 12 M8 4 C12 4 12.5 8 12.5 12" fill="none" stroke="#d2d2d2" stroke-width="1.1"/><rect x="2" y="11" width="3" height="3" fill="#d2d2d2"/><rect x="11" y="11" width="3" height="3" fill="#d2d2d2"/></svg>
<div style="left:929px;top:339px;width:58px;height:13px;background:#444444"></div>
<svg style="left:932px;top:341px" width="9" height="9" viewBox="0 0 9 9"><circle cx="5.2" cy="3.8" r="2.6" fill="none" stroke="#d0d0d0" stroke-width="1.1"/><path d="M3.5 5.5 L1 8" stroke="#d0d0d0" stroke-width="1.3"/></svg>
<span class="t" style="left:943px;top:341px;color:#d8d8d8;font-size:9px">类型</span>
<svg style="left:977px;top:343px" width="7" height="5" viewBox="0 0 7 5"><path d="M1 1 L3.5 3.5 L6 1" fill="none" stroke="#9a9a9a" stroke-width="1"/></svg>
<svg style="left:996px;top:340px" width="11" height="11" viewBox="0 0 11 11"><rect x="1" y="1.5" width="9" height="8" fill="none" stroke="#d0d0d0" stroke-width="1.1"/><path d="M2.5 7.5 L4.5 5 L6 6.5 L7.5 4.5 L9 7.5 Z" fill="#d0d0d0"/></svg>
<svg style="left:1013px;top:340px" width="11" height="11" viewBox="0 0 11 11"><circle cx="5.5" cy="5.5" r="4.5" fill="#d0d0d0"/><path d="M5.5 1 A4.5 4.5 0 0 0 5.5 10 Z" fill="#555"/></svg>
<div style="left:929px;top:358px;width:79px;height:11px;background:#444444"></div>
<span class="t" style="left:934px;top:359px;color:#e0e0e0;font-size:9px">正常</span>
<svg style="left:998px;top:361px" width="7" height="5" viewBox="0 0 7 5"><path d="M1 1 L3.5 3.5 L6 1" fill="none" stroke="#8a8a8a" stroke-width="1"/></svg>
<span class="t" style="left:1013px;top:359px;color:#cfcfcf;font-size:9px">不</span>
<span class="t" style="left:930px;top:377px;color:#c4c4c4;font-size:9px">锁定:</span>
<svg style="left:954px;top:377px" width="10" height="10" viewBox="0 0 10 10"><rect x="1" y="1" width="8" height="8" fill="none" stroke="#d0d0d0" stroke-width="1"/><rect x="1" y="1" width="4" height="4" fill="#d0d0d0"/><rect x="5" y="5" width="4" height="4" fill="#d0d0d0"/></svg>
<svg style="left:968px;top:376px" width="11" height="11" viewBox="0 0 11 11"><path d="M10 1 L5 6.5" stroke="#d0d0d0" stroke-width="1.5"/><path d="M4.5 6 C3 6.5 2.5 8 2 10 C4 9.5 5 9 5.5 7.5 Z" fill="#d0d0d0"/></svg>
<svg style="left:983px;top:376px" width="11" height="11" viewBox="0 0 11 11"><path d="M5.5 1 V10 M1 5.5 H10 M4 2.5 L5.5 1 L7 2.5 M4 8.5 L5.5 10 L7 8.5 M2.5 4 L1 5.5 L2.5 7 M8.5 4 L10 5.5 L8.5 7" fill="none" stroke="#d0d0d0" stroke-width="1"/></svg>
<svg style="left:998px;top:376px" width="11" height="11" viewBox="0 0 11 11"><path d="M3 1 V8 H10 M1 3 H8 V10" fill="none" stroke="#d0d0d0" stroke-width="1.1"/></svg>
<svg style="left:1014px;top:376px" width="9" height="11" viewBox="0 0 9 11"><path d="M2.5 5 V3.5 A2 2 0 0 1 6.5 3.5 V5" fill="none" stroke="#d0d0d0" stroke-width="1.1"/><rect x="1" y="5" width="7" height="5.5" fill="#d0d0d0"/></svg>
<div style="left:925px;top:391px;width:97px;height:1px;background:#444"></div>
<div style="left:946px;top:393px;width:76px;height:21px;background:#606060"></div>
<div style="left:925px;top:413px;width:97px;height:1px;background:#4a4a4a"></div>
<svg style="left:930px;top:399px" width="12" height="9" viewBox="0 0 12 9"><path d="M0.5 4.5 C3 0 9 0 11.5 4.5 C9 9 3 9 0.5 4.5 Z" fill="#d8d8d8"/><circle cx="6" cy="4.5" r="2.2" fill="#535353"/><circle cx="6" cy="4.5" r="1" fill="#d8d8d8"/></svg>
<div style="left:949px;top:396px;width:22px;height:16px;background-color:#fff;background-image:linear-gradient(45deg,#d6d6d6 25%,transparent 25%,transparent 75%,#d6d6d6 75%),linear-gradient(45deg,#d6d6d6 25%,transparent 25%,transparent 75%,#d6d6d6 75%);background-size:6px 6px;background-position:0 0,3px 3px;box-shadow:0 0 0 1px #333"></div>
<div style="left:947px;top:394px;width:24px;height:18px;border:1px solid #e8e8e8;box-sizing:border-box;left:948px;top:395px;"></div>
<span class="t" style="left:977px;top:400px;color:#dedede;font-size:8px">图层 13</span>
<div style="left:925px;top:434px;width:97px;height:1px;background:#4a4a4a"></div>
<svg style="left:930px;top:420px" width="12" height="9" viewBox="0 0 12 9"><path d="M0.5 4.5 C3 0 9 0 11.5 4.5 C9 9 3 9 0.5 4.5 Z" fill="#d8d8d8"/><circle cx="6" cy="4.5" r="2.2" fill="#535353"/><circle cx="6" cy="4.5" r="1" fill="#d8d8d8"/></svg>
<div style="left:949px;top:417px;width:22px;height:16px;background-color:#fff;background-image:linear-gradient(45deg,#d6d6d6 25%,transparent 25%,transparent 75%,#d6d6d6 75%),linear-gradient(45deg,#d6d6d6 25%,transparent 25%,transparent 75%,#d6d6d6 75%);background-size:6px 6px;background-position:0 0,3px 3px;box-shadow:0 0 0 1px #333"></div>
<span class="t" style="left:977px;top:421px;color:#dedede;font-size:8px">Current Situation</span>
<div style="left:925px;top:455px;width:97px;height:1px;background:#4a4a4a"></div>
<svg style="left:930px;top:441px" width="12" height="9" viewBox="0 0 12 9"><path d="M0.5 4.5 C3 0 9 0 11.5 4.5 C9 9 3 9 0.5 4.5 Z" fill="#d8d8d8"/><circle cx="6" cy="4.5" r="2.2" fill="#535353"/><circle cx="6" cy="4.5" r="1" fill="#d8d8d8"/></svg>
<div style="left:949px;top:438px;width:22px;height:16px;background-color:#fff;background-image:linear-gradient(45deg,#d6d6d6 25%,transparent 25%,transparent 75%,#d6d6d6 75%),linear-gradient(45deg,#d6d6d6 25%,transparent 25%,transparent 75%,#d6d6d6 75%);background-size:6px 6px;background-position:0 0,3px 3px;box-shadow:0 0 0 1px #333"></div>
<span class="t" style="left:977px;top:442px;color:#dedede;font-size:8px">Current Situation</span>
<div style="left:925px;top:476px;width:97px;height:1px;background:#4a4a4a"></div>
<svg style="left:930px;top:462px" width="12" height="9" viewBox="0 0 12 9"><path d="M0.5 4.5 C3 0 9 0 11.5 4.5 C9 9 3 9 0.5 4.5 Z" fill="#d8d8d8"/><circle cx="6" cy="4.5" r="2.2" fill="#535353"/><circle cx="6" cy="4.5" r="1" fill="#d8d8d8"/></svg>
<div style="left:949px;top:459px;width:22px;height:16px;background-color:#fff;background-image:linear-gradient(45deg,#d6d6d6 25%,transparent 25%,transparent 75%,#d6d6d6 75%),linear-gradient(45deg,#d6d6d6 25%,transparent 25%,transparent 75%,#d6d6d6 75%);background-size:6px 6px;background-position:0 0,3px 3px;box-shadow:0 0 0 1px #333"></div>
<svg style="left:959px;top:466px" width="12" height="10" viewBox="0 0 12 10"><rect x="1" y="0" width="11" height="10" fill="#f2f2f2"/><path d="M1.5 10 V1 H11" fill="none" stroke="#1e1e1e" stroke-width="1.3"/><rect x="3.8" y="3.3" width="5" height="4.6" fill="#f2f2f2" stroke="#2a2a2a" stroke-width="1.2"/></svg>
<span class="t" style="left:977px;top:463px;color:#dedede;font-size:8px">形状 2 拷贝</span>
<div style="left:925px;top:497px;width:97px;height:1px;background:#4a4a4a"></div>
<svg style="left:930px;top:483px" width="12" height="9" viewBox="0 0 12 9"><path d="M0.5 4.5 C3 0 9 0 11.5 4.5 C9 9 3 9 0.5 4.5 Z" fill="#d8d8d8"/><circle cx="6" cy="4.5" r="2.2" fill="#535353"/><circle cx="6" cy="4.5" r="1" fill="#d8d8d8"/></svg>
<div style="left:949px;top:480px;width:22px;height:16px;background-color:#fff;background-image:linear-gradient(45deg,#d6d6d6 25%,transparent 25%,transparent 75%,#d6d6d6 75%),linear-gradient(45deg,#d6d6d6 25%,transparent 25%,transparent 75%,#d6d6d6 75%);background-size:6px 6px;background-position:0 0,3px 3px;box-shadow:0 0 0 1px #333"></div>
<svg style="left:959px;top:487px" width="12" height="10" viewBox="0 0 12 10"><rect x="1" y="0" width="11" height="10" fill="#f2f2f2"/><path d="M1.5 10 V1 H11" fill="none" stroke="#1e1e1e" stroke-width="1.3"/><rect x="3.8" y="3.3" width="5" height="4.6" fill="#f2f2f2" stroke="#2a2a2a" stroke-width="1.2"/></svg>
<span class="t" style="left:977px;top:484px;color:#dedede;font-size:8px">形状 2</span>
<div style="left:925px;top:518px;width:97px;height:1px;background:#4a4a4a"></div>
<svg style="left:930px;top:504px" width="12" height="9" viewBox="0 0 12 9"><path d="M0.5 4.5 C3 0 9 0 11.5 4.5 C9 9 3 9 0.5 4.5 Z" fill="#d8d8d8"/><circle cx="6" cy="4.5" r="2.2" fill="#535353"/><circle cx="6" cy="4.5" r="1" fill="#d8d8d8"/></svg>
<div style="left:949px;top:501px;width:22px;height:16px;background-color:#fff;background-image:linear-gradient(45deg,#d6d6d6 25%,transparent 25%,transparent 75%,#d6d6d6 75%),linear-gradient(45deg,#d6d6d6 25%,transparent 25%,transparent 75%,#d6d6d6 75%);background-size:6px 6px;background-position:0 0,3px 3px;box-shadow:0 0 0 1px #333"></div>
<span class="t" style="left:977px;top:505px;color:#dedede;font-size:8px">Ground Layer</span>
<div style="left:925px;top:539px;width:97px;height:1px;background:#4a4a4a"></div>
<svg style="left:930px;top:525px" width="12" height="9" viewBox="0 0 12 9"><path d="M0.5 4.5 C3 0 9 0 11.5 4.5 C9 9 3 9 0.5 4.5 Z" fill="#d8d8d8"/><circle cx="6" cy="4.5" r="2.2" fill="#535353"/><circle cx="6" cy="4.5" r="1" fill="#d8d8d8"/></svg>
<div style="left:949px;top:522px;width:22px;height:16px;background-color:#fff;background-image:linear-gradient(45deg,#d6d6d6 25%,transparent 25%,transparent 75%,#d6d6d6 75%),linear-gradient(45deg,#d6d6d6 25%,transparent 25%,transparent 75%,#d6d6d6 75%);background-size:6px 6px;background-position:0 0,3px 3px;box-shadow:0 0 0 1px #333"></div>
<span class="t" style="left:977px;top:526px;color:#dedede;font-size:8px">Ground Layer</span>
<div style="left:925px;top:560px;width:97px;height:1px;background:#4a4a4a"></div>
<svg style="left:930px;top:546px" width="12" height="9" viewBox="0 0 12 9"><path d="M0.5 4.5 C3 0 9 0 11.5 4.5 C9 9 3 9 0.5 4.5 Z" fill="#d8d8d8"/><circle cx="6" cy="4.5" r="2.2" fill="#535353"/><circle cx="6" cy="4.5" r="1" fill="#d8d8d8"/></svg>
<div style="left:949px;top:543px;width:22px;height:16px;background-color:#fff;background-image:linear-gradient(45deg,#d6d6d6 25%,transparent 25%,transparent 75%,#d6d6d6 75%),linear-gradient(45deg,#d6d6d6 25%,transparent 25%,transparent 75%,#d6d6d6 75%);background-size:6px 6px;background-position:0 0,3px 3px;box-shadow:0 0 0 1px #333"></div>
<span class="t" style="left:977px;top:547px;color:#dedede;font-size:8px">Ground Layer</span>
<div style="left:925px;top:581px;width:97px;height:1px;background:#4a4a4a"></div>
<svg style="left:930px;top:567px" width="12" height="9" viewBox="0 0 12 9"><path d="M0.5 4.5 C3 0 9 0 11.5 4.5 C9 9 3 9 0.5 4.5 Z" fill="#d8d8d8"/><circle cx="6" cy="4.5" r="2.2" fill="#535353"/><circle cx="6" cy="4.5" r="1" fill="#d8d8d8"/></svg>
<div style="left:949px;top:564px;width:22px;height:16px;background-color:#fff;background-image:linear-gradient(45deg,#d6d6d6 25%,transparent 25%,transparent 75%,#d6d6d6 75%),linear-gradient(45deg,#d6d6d6 25%,transparent 25%,transparent 75%,#d6d6d6 75%);background-size:6px 6px;background-position:0 0,3px 3px;box-shadow:0 0 0 1px #333"></div>
<span class="t" style="left:977px;top:568px;color:#dedede;font-size:8px">Ground Layer</span>
<div style="left:925px;top:576px;width:97px;height:16px;background:#535353"></div>
<svg style="left:952px;top:578px" width="12" height="9" viewBox="0 0 12 9"><path d="M5 2 H3 A2.5 2.5 0 0 0 3 7 H5 M7 2 H9 A2.5 2.5 0 0 1 9 7 H7 M4 4.5 H8" fill="none" stroke="#7a7a7a" stroke-width="1.1"/></svg>
<span class="t" style="left:972px;top:577px;color:#d0d0d0;font-size:10px;font-family:Liberation Serif"><i>fx</i></span>
<svg style="left:988px;top:577px" width="12" height="10" viewBox="0 0 12 10"><rect x="0.5" y="0.5" width="11" height="9" fill="#d8d8d8"/><circle cx="6" cy="5" r="2.8" fill="#4a4a4a"/></svg>
<svg style="left:1008px;top:577px" width="11" height="11" viewBox="0 0 11 11"><circle cx="5.5" cy="5.5" r="4.5" fill="#d0d0d0"/><path d="M9 2.5 L2 8.5 A4.5 4.5 0 0 0 9 2.5 Z" fill="#555"/></svg>
<div style="left:1022px;top:0px;width:2px;height:594px;background:#2c2c2c"></div>
<div style="left:208px;top:139px;width:510px;height:361px;background:#1e1e1e"></div>
<div style="left:209px;top:140px;width:508px;height:358px;background:#e6eef7"></div>
<div style="left:427px;top:140px;width:266px;height:358px;background:#ffffff"></div>
<svg style="left:0;top:0;will-change:transform" width="1024" height="594" viewBox="0 0 1024 594"><path d="M619.5 172 V456" stroke="#d6d6d6" stroke-width="1"/><path d="M535 262 V410 M577 250 V420 M609 230 V376 M555 300 V400" stroke="#ececec" stroke-width="0.8"/><path d="M540 330 L600 300 M545 350 L610 320 M540 300 L590 340 M560 280 L600 305" stroke="#efefef" stroke-width="0.7"/><g><path d="M499 164 C500 161 505 160 510 160.5 L524 158.5 L527.5 154.5 L528.5 155 L526.5 160 C524 163 515 165.5 505 166.5 C501 166.8 499 166 499 164 Z" fill="#bdbdbd"/><path d="M510 164 L535 172 L534 173 L508 166 Z" fill="#cfcfcf"/><path d="M505 160.5 L495 158 L497 157.5 L512 160 Z" fill="#d0d0d0"/><ellipse cx="517" cy="170.5" rx="2.6" ry="2" fill="#3e3e3e"/><path d="M503 162 H507" stroke="#8a8a8a" stroke-width="0.8"/></g><ellipse cx="559.2" cy="181.2" rx="1.42" ry="1.09" fill="#3a3a3a" opacity="0.65"/><ellipse cx="560.5" cy="179.3" rx="1.68" ry="1.29" fill="#3a3a3a" opacity="0.63"/><ellipse cx="556" cy="183" rx="1.59" ry="1.22" fill="#3a3a3a" opacity="0.73"/><ellipse cx="561" cy="183.7" rx="1.22" ry="0.93" fill="#3a3a3a" opacity="0.78"/><ellipse cx="565" cy="181.8" rx="1.20" ry="0.92" fill="#3a3a3a" opacity="0.75"/><ellipse cx="566.2" cy="185.6" rx="1.22" ry="0.94" fill="#3a3a3a" opacity="0.63"/><ellipse cx="570.6" cy="188.8" rx="1.50" ry="1.15" fill="#3a3a3a" opacity="0.89"/><ellipse cx="579.5" cy="186.3" rx="1.27" ry="0.97" fill="#3a3a3a" opacity="0.68"/><ellipse cx="586.5" cy="179.3" rx="1.66" ry="1.28" fill="#3a3a3a" opacity="0.93"/><ellipse cx="590.3" cy="176.7" rx="1.62" ry="1.25" fill="#3a3a3a" opacity="0.74"/><ellipse cx="594" cy="179.3" rx="1.93" ry="1.49" fill="#3a3a3a" opacity="0.62"/><ellipse cx="591.6" cy="183" rx="1.84" ry="1.42" fill="#3a3a3a" opacity="0.70"/><ellipse cx="586.5" cy="188.2" rx="1.28" ry="0.99" fill="#3a3a3a" opacity="0.64"/><ellipse cx="591.6" cy="190.7" rx="1.41" ry="1.09" fill="#3a3a3a" opacity="0.89"/><ellipse cx="595.4" cy="189.4" rx="1.31" ry="1.01" fill="#3a3a3a" opacity="0.80"/><ellipse cx="604.9" cy="190" rx="1.67" ry="1.28" fill="#3a3a3a" opacity="0.73"/><ellipse cx="545.9" cy="195.1" rx="1.60" ry="1.23" fill="#3a3a3a" opacity="0.62"/><ellipse cx="552.2" cy="197" rx="1.22" ry="0.94" fill="#3a3a3a" opacity="0.67"/><ellipse cx="537.6" cy="197.7" rx="1.70" ry="1.31" fill="#3a3a3a" opacity="0.75"/><ellipse cx="551" cy="192" rx="1.42" ry="1.09" fill="#3a3a3a" opacity="0.80"/><ellipse cx="536.3" cy="186.3" rx="1.52" ry="1.17" fill="#3a3a3a" opacity="0.70"/><ellipse cx="526.8" cy="190" rx="1.79" ry="1.38" fill="#3a3a3a" opacity="0.84"/><ellipse cx="561" cy="197" rx="1.36" ry="1.05" fill="#3a3a3a" opacity="0.80"/><ellipse cx="570" cy="177.4" rx="1.58" ry="1.22" fill="#3a3a3a" opacity="0.91"/><ellipse cx="577.6" cy="178" rx="1.74" ry="1.34" fill="#3a3a3a" opacity="0.70"/><ellipse cx="583" cy="183" rx="1.93" ry="1.49" fill="#3a3a3a" opacity="0.64"/><ellipse cx="597" cy="184" rx="1.50" ry="1.15" fill="#3a3a3a" opacity="0.86"/><ellipse cx="548" cy="186" rx="1.29" ry="0.99" fill="#3a3a3a" opacity="0.77"/><ellipse cx="542" cy="191" rx="1.20" ry="0.92" fill="#3a3a3a" opacity="0.83"/><ellipse cx="531" cy="194" rx="1.77" ry="1.36" fill="#3a3a3a" opacity="0.80"/><circle cx="603.8" cy="184.2" r="0.6" fill="#9a9a9a" opacity="0.6"/><circle cx="586.1" cy="191.5" r="0.6" fill="#9a9a9a" opacity="0.6"/><circle cx="574.8" cy="187.9" r="0.6" fill="#9a9a9a" opacity="0.6"/><circle cx="600.3" cy="200.6" r="0.6" fill="#9a9a9a" opacity="0.6"/><circle cx="564.5" cy="193.3" r="0.6" fill="#9a9a9a" opacity="0.6"/><circle cx="523.9" cy="194.2" r="0.6" fill="#9a9a9a" opacity="0.6"/><circle cx="581.4" cy="201.8" r="0.6" fill="#9a9a9a" opacity="0.6"/><circle cx="598.5" cy="183.4" r="0.6" fill="#9a9a9a" opacity="0.6"/><circle cx="555.8" cy="193.4" r="0.6" fill="#9a9a9a" opacity="0.6"/><circle cx="520.2" cy="188.0" r="0.6" fill="#9a9a9a" opacity="0.6"/><circle cx="534.5" cy="179.0" r="0.6" fill="#9a9a9a" opacity="0.6"/><circle cx="523.8" cy="196.0" r="0.6" fill="#9a9a9a" opacity="0.6"/><circle cx="530.7" cy="182.4" r="0.6" fill="#9a9a9a" opacity="0.6"/><circle cx="556.3" cy="198.7" r="0.6" fill="#9a9a9a" opacity="0.6"/><circle cx="525.9" cy="187.7" r="0.6" fill="#9a9a9a" opacity="0.6"/><circle cx="571.8" cy="199.0" r="0.6" fill="#9a9a9a" opacity="0.6"/><circle cx="598.3" cy="198.5" r="0.6" fill="#9a9a9a" opacity="0.6"/><circle cx="545.3" cy="186.8" r="0.6" fill="#9a9a9a" opacity="0.6"/><circle cx="553.2" cy="199.0" r="0.6" fill="#9a9a9a" opacity="0.6"/><circle cx="611.9" cy="179.9" r="0.6" fill="#9a9a9a" opacity="0.6"/><circle cx="535.3" cy="182.0" r="0.6" fill="#9a9a9a" opacity="0.6"/><circle cx="540.9" cy="188.6" r="0.6" fill="#9a9a9a" opacity="0.6"/><circle cx="575.7" cy="182.8" r="0.6" fill="#9a9a9a" opacity="0.6"/><circle cx="518.4" cy="186.9" r="0.6" fill="#9a9a9a" opacity="0.6"/><circle cx="554.2" cy="190.7" r="0.6" fill="#9a9a9a" opacity="0.6"/><defs><linearGradient id="p1" x1="0" y1="0" x2="0" y2="1"><stop offset="0" stop-color="#c6cacd"/><stop offset="0.5" stop-color="#b2b6b8"/><stop offset="1" stop-color="#a0a3a0"/></linearGradient><linearGradient id="p2" x1="0" y1="0" x2="1" y2="1"><stop offset="0" stop-color="#b2b2b0"/><stop offset="0.5" stop-color="#999997"/><stop offset="1" stop-color="#b8b8b4"/></linearGradient><linearGradient id="p3" x1="0" y1="0" x2="0" y2="1"><stop offset="0" stop-color="#c2cedb"/><stop offset="0.6" stop-color="#ccd6e0"/><stop offset="1" stop-color="#bcc6d0"/></linearGradient><linearGradient id="ch" x1="0" y1="0" x2="0" y2="1"><stop offset="0" stop-color="#7393b2"/><stop offset="1" stop-color="#6485a6"/></linearGradient></defs><g transform="matrix(1 -0.6467 0 1 466 235.5)"><rect x="0" y="0" width="60" height="32.6" fill="url(#p1)"/><path d="M0 13 L5 11 L9 13 L15 10 L21 12 L28 9 L35 11 L42 8 L50 10 L56 7 L60 8 V26 L0 28 Z" fill="#7c807c" opacity="0.95"/><path d="M0 17 L8 16 L14 19 L22 16 L30 18 L38 15 L46 17 L60 14 V22 L0 25 Z" fill="#626662" opacity="0.9"/><path d="M2 24.5 L58 20.5" stroke="#dcdcdc" stroke-width="1.5" stroke-dasharray="3 1.5 1 2" opacity="0.9"/><path d="M0 27 L60 23 V32.6 H0 Z" fill="#8e918d" opacity="0.9"/></g><g transform="matrix(1 -0.6467 0 1 470 316.5)"><path d="M0 -6 L6 -9 L11 -12 L16 -14 L20 -10 L26.5 -9 L32.5 -13 L36 -16 L39.6 -20 V0 H0 Z" fill="url(#ch)"/><path d="M0 -6 L6 -9 L11 -12 L16 -14 L20 -10 L24 -9" fill="none" stroke="#9cb88a" stroke-width="1.6" opacity="0.9"/><path d="M0 -18 L24 -18" stroke="#e2e2e2" stroke-width="0.6"/><path d="M40 -26 L47 -26 M40 -22 L46 -22" stroke="#d6d6d6" stroke-width="0.6"/></g><g transform="matrix(1 -0.6467 0 1 466 331)"><rect x="0" y="0" width="59.5" height="30" fill="url(#p2)"/><rect x="26.2" y="16.2" width="6.6" height="2.4" fill="#7a7a78" opacity="0.55"/><rect x="49.6" y="5.5" width="6.0" height="2.4" fill="#7a7a78" opacity="0.55"/><rect x="46.0" y="2.7" width="3.5" height="1.3" fill="#b0b0ac" opacity="0.55"/><rect x="36.8" y="17.3" width="4.0" height="2.4" fill="#b0b0ac" opacity="0.55"/><rect x="35.7" y="4.6" width="2.1" height="2.6" fill="#8a8a88" opacity="0.55"/><rect x="2.1" y="25.5" width="5.0" height="3.3" fill="#c4c4c0" opacity="0.55"/><rect x="25.6" y="24.4" width="4.6" height="2.9" fill="#d2d2ce" opacity="0.55"/><rect x="0.3" y="2.5" width="5.3" height="2.2" fill="#7a7a78" opacity="0.55"/><rect x="57.8" y="24.4" width="1.7" height="1.9" fill="#9c9c9a" opacity="0.55"/><rect x="29.7" y="0.9" width="4.8" height="1.3" fill="#8a8a88" opacity="0.55"/><rect x="49.1" y="11.2" width="6.8" height="3.5" fill="#8a8a88" opacity="0.55"/><rect x="12.4" y="26.9" width="2.3" height="2.1" fill="#b0b0ac" opacity="0.55"/><rect x="23.1" y="2.1" width="5.1" height="3.3" fill="#c4c4c0" opacity="0.55"/><rect x="19.5" y="9.0" width="2.1" height="2.2" fill="#8a8a88" opacity="0.55"/><rect x="7.8" y="20.5" width="2.1" height="2.4" fill="#d2d2ce" opacity="0.55"/><rect x="10.3" y="16.2" width="4.2" height="1.6" fill="#b0b0ac" opacity="0.55"/><rect x="44.6" y="12.2" width="3.9" height="2.2" fill="#9c9c9a" opacity="0.55"/><rect x="0.0" y="25.1" width="6.9" height="2.8" fill="#8a8a88" opacity="0.55"/><rect x="12.2" y="11.4" width="6.3" height="2.9" fill="#8a8a88" opacity="0.55"/><rect x="2.4" y="4.2" width="4.2" height="1.0" fill="#7a7a78" opacity="0.55"/><rect x="19.1" y="8.6" width="2.4" height="1.3" fill="#7a7a78" opacity="0.55"/><rect x="36.9" y="0.4" width="3.8" height="2.9" fill="#9c9c9a" opacity="0.55"/><rect x="55.6" y="14.0" width="3.9" height="3.6" fill="#9c9c9a" opacity="0.55"/><rect x="36.4" y="9.0" width="3.1" height="2.8" fill="#b0b0ac" opacity="0.55"/><rect x="11.0" y="21.4" width="6.7" height="1.6" fill="#d2d2ce" opacity="0.55"/><rect x="51.2" y="17.5" width="4.1" height="1.3" fill="#8a8a88" opacity="0.55"/><rect x="29.7" y="7.4" width="5.7" height="2.2" fill="#d2d2ce" opacity="0.55"/><rect x="47.8" y="17.3" width="3.5" height="1.5" fill="#b0b0ac" opacity="0.55"/><rect x="56.7" y="3.7" width="2.8" height="3.0" fill="#7a7a78" opacity="0.55"/><rect x="35.6" y="8.1" width="6.6" height="1.6" fill="#8a8a88" opacity="0.55"/><rect x="4.0" y="11.9" width="3.2" height="1.1" fill="#c4c4c0" opacity="0.55"/><rect x="21.4" y="16.6" width="2.7" height="2.1" fill="#d2d2ce" opacity="0.55"/><rect x="56.9" y="19.1" width="2.6" height="2.8" fill="#9c9c9a" opacity="0.55"/><rect x="34.2" y="26.8" width="4.4" height="2.1" fill="#c4c4c0" opacity="0.55"/><rect x="55.8" y="0.6" width="3.7" height="2.4" fill="#b0b0ac" opacity="0.55"/><rect x="18.0" y="4.0" width="2.4" height="2.4" fill="#c4c4c0" opacity="0.55"/><rect x="42.7" y="26.1" width="5.7" height="3.1" fill="#c4c4c0" opacity="0.55"/><rect x="20.4" y="19.9" width="6.5" height="3.6" fill="#d2d2ce" opacity="0.55"/><rect x="54.8" y="0.9" width="4.5" height="1.0" fill="#b0b0ac" opacity="0.55"/><rect x="22.2" y="16.9" width="5.0" height="1.2" fill="#b0b0ac" opacity="0.55"/><rect x="6.7" y="7.5" width="4.1" height="2.0" fill="#b0b0ac" opacity="0.55"/><rect x="40.3" y="13.3" width="4.3" height="2.6" fill="#7a7a78" opacity="0.55"/><rect x="43.5" y="0.9" width="5.0" height="2.4" fill="#9c9c9a" opacity="0.55"/><rect x="55.5" y="3.3" width="4.0" height="3.0" fill="#d2d2ce" opacity="0.55"/><rect x="14.8" y="0.3" width="3.5" height="3.0" fill="#9c9c9a" opacity="0.55"/><rect x="30.1" y="21.9" width="3.7" height="3.8" fill="#d2d2ce" opacity="0.55"/><rect x="51.7" y="9.5" width="5.3" height="1.6" fill="#d2d2ce" opacity="0.55"/><rect x="46.6" y="21.9" width="3.0" height="1.6" fill="#9c9c9a" opacity="0.55"/><rect x="33.8" y="9.2" width="2.7" height="2.5" fill="#8a8a88" opacity="0.55"/><rect x="41.3" y="27.6" width="3.4" height="1.5" fill="#d2d2ce" opacity="0.55"/><rect x="27.3" y="26.8" width="6.2" height="2.1" fill="#7a7a78" opacity="0.55"/><rect x="28.6" y="9.1" width="6.2" height="3.9" fill="#d2d2ce" opacity="0.55"/><rect x="18.6" y="24.0" width="3.4" height="2.8" fill="#b0b0ac" opacity="0.55"/><rect x="41.1" y="16.5" width="3.5" height="3.4" fill="#8a8a88" opacity="0.55"/><rect x="37.2" y="11.8" width="2.9" height="3.3" fill="#c4c4c0" opacity="0.55"/><rect x="13.8" y="4.1" width="2.2" height="2.9" fill="#d2d2ce" opacity="0.55"/><rect x="6.3" y="15.5" width="5.2" height="2.1" fill="#8a8a88" opacity="0.55"/><rect x="39.7" y="5.8" width="4.4" height="1.5" fill="#8a8a88" opacity="0.55"/><rect x="43.8" y="15.5" width="2.2" height="1.7" fill="#c4c4c0" opacity="0.55"/><rect x="31.3" y="27.5" width="4.5" height="2.5" fill="#9c9c9a" opacity="0.55"/><rect x="22.8" y="23.0" width="6.5" height="1.3" fill="#b0b0ac" opacity="0.55"/><rect x="22.5" y="13.1" width="3.0" height="3.7" fill="#8a8a88" opacity="0.55"/><rect x="21.9" y="16.5" width="6.4" height="3.4" fill="#c4c4c0" opacity="0.55"/><rect x="26.9" y="18.9" width="3.0" height="3.2" fill="#b0b0ac" opacity="0.55"/><rect x="53.6" y="3.6" width="3.2" height="2.2" fill="#8a8a88" opacity="0.55"/><rect x="56.7" y="15.6" width="2.8" height="2.0" fill="#b0b0ac" opacity="0.55"/><rect x="49.6" y="10.1" width="2.4" height="2.3" fill="#7a7a78" opacity="0.55"/><rect x="24.4" y="8.0" width="6.6" height="1.7" fill="#8a8a88" opacity="0.55"/><rect x="24.9" y="1.0" width="4.7" height="3.1" fill="#9c9c9a" opacity="0.55"/><rect x="27.3" y="29.0" width="6.5" height="1.0" fill="#b0b0ac" opacity="0.55"/><path d="M20 4 L28 2 L33 8 L30 18 L24 24 L19 18 Z" fill="#6e6e6c" opacity="0.45"/><path d="M0 10 L12 6 L22 12" fill="none" stroke="#7a7a78" stroke-width="1.5" opacity="0.5"/></g><g transform="matrix(1 -0.6467 0 1 465.7 386.5)"><rect x="0" y="0" width="58.7" height="36" fill="url(#p3)"/><path d="M0 23.5 L58.7 22.5" stroke="#8c96a2" stroke-width="1.3" opacity="0.8"/><path d="M0 25 L58.7 24 V27 L0 28 Z" fill="#d4dbe3"/><rect x="39" y="26" width="8" height="2" fill="#4a5058" opacity="0.85"/></g><text x="0" y="0" transform="translate(446 247) rotate(-35.3)" font-size="5.6" fill="#505050" font-family="Liberation Sans" textLength="48" lengthAdjust="spacingAndGlyphs">Current Situation</text><text x="0" y="0" transform="translate(446 398) rotate(-35.3)" font-size="5.6" fill="#505050" font-family="Liberation Sans" textLength="48" lengthAdjust="spacingAndGlyphs">Current Situation</text><text x="0" y="0" transform="translate(623 178) rotate(9)" font-size="5.4" fill="#505050" font-family="Liberation Sans">Ground Layer</text><text x="0" y="0" transform="translate(623 226) rotate(9)" font-size="5.4" fill="#505050" font-family="Liberation Sans">Ground Layer</text><text x="0" y="0" transform="translate(623 268) rotate(9)" font-size="5.4" fill="#505050" font-family="Liberation Sans">Ground Layer</text><text x="0" y="0" transform="translate(623 284) rotate(9)" font-size="5.4" fill="#505050" font-family="Liberation Sans">Ground Layer</text><text x="0" y="0" transform="translate(623 334) rotate(9)" font-size="5.4" fill="#505050" font-family="Liberation Sans">Ground Layer</text><text x="0" y="0" transform="translate(623 382) rotate(9)" font-size="5.4" fill="#505050" font-family="Liberation Sans">Ground Layer</text><text x="0" y="0" transform="translate(623 441) rotate(9)" font-size="5.4" fill="#505050" font-family="Liberation Sans">Ground Layer</text><ellipse cx="541.7" cy="224" rx="5.5" ry="6.5" fill="#d6d6d6" transform="rotate(-20 541.7 224)"/><ellipse cx="542.5" cy="225" rx="3" ry="3.5" fill="#c4c4c4"/><path d="M601 217 L602.5 212 L606 212.5 L605 217 Z" fill="#a4a4a4"/><path d="M609 217 L610 210 L615.5 209 L616.5 216 Z" fill="#9a9a9a"/><circle cx="612" cy="227" r="1" fill="#888"/><path d="M540 245 L555 238 M542 252 L560 244 M545 258 L556 252 M570 253 L578 249 M578 233 L598 224" stroke="#bdbdbd" stroke-width="0.7" stroke-dasharray="1.5 1"/><ellipse cx="568" cy="275" rx="9" ry="2.8" fill="#a9c9e2"/><ellipse cx="569" cy="273" rx="4" ry="2" fill="#b8d4ea"/><path d="M586 285 L598 282" stroke="#d8dcb8" stroke-width="1.2"/><circle cx="556" cy="307" r="0.9" fill="#c8c8c8"/><circle cx="566" cy="312" r="0.9" fill="#c8c8c8"/><circle cx="576" cy="326" r="0.9" fill="#c8c8c8"/><circle cx="541" cy="318" r="0.9" fill="#c8c8c8"/><circle cx="594" cy="291" r="0.9" fill="#c8c8c8"/><circle cx="548" cy="332" r="0.9" fill="#c8c8c8"/><circle cx="575" cy="300" r="0.9" fill="#c8c8c8"/><path d="M518.3 405.4 L563.7 372 L617 376.3 L579.4 421.1 Z" fill="#f3f3f3" stroke="#dadada" stroke-width="0.8"/><path d="M518.3 405.4 L579.4 421.1 L617 376.3" fill="none" stroke="#cdcdcd" stroke-width="1"/><path d="M566 377 C568 373 575 373 578 377" fill="none" stroke="#a8a8a8" stroke-width="1.2"/><path d="M565 379 H580" stroke="#c0c0c0" stroke-width="0.8"/><circle cx="535" cy="404" r="1" fill="#9a9a9a"/><circle cx="562" cy="404" r="1" fill="#9a9a9a"/><circle cx="592" cy="385" r="1" fill="#9a9a9a"/><circle cx="593" cy="399" r="1" fill="#9a9a9a"/><circle cx="550" cy="391" r="1" fill="#9a9a9a"/><defs><clipPath id="tc"><path d="M540.6 451.7 L565.6 434 L593.3 436 L574.8 460 Z"/></clipPath></defs><path d="M540.6 451.7 L565.6 434 L593.3 436 L574.8 460 Z" fill="#a6b9cf"/><g clip-path="url(#tc)"><path d="M546 454 L572 436 M552 456 L579 437 M558 458 L585 438 M564 460 L591 440" stroke="#93a9c1" stroke-width="1"/></g></svg>
<div style="left:798.5px;top:202px;width:43px;height:43px;border-radius:50%;background:#a39c12;box-shadow:0 0 1.5px 0.8px rgba(150,145,20,0.7)"></div>
<div style="left:813px;top:223.5px;width:14px;height:1.3px;background:#dcd47e"></div>
<div style="left:819.5px;top:217px;width:1.3px;height:14px;background:#dcd47e"></div>
</body></html>
